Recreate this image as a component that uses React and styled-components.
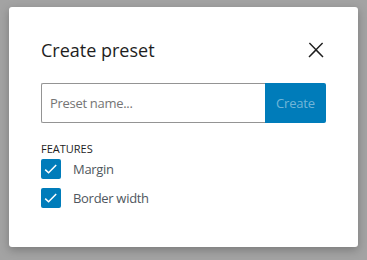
import React from "react";
import styled, {createGlobalStyle} from "styled-components";

const GlobalStyle = createGlobalStyle`
    html, body {
        margin: 0;
        padding: 0;
        height: 100%;
    }
    body {
        background: #a3a3a3;
        font-family: "Open Sans", "Noto Sans", sans-serif;
    }
    #root {
        height: 100%;
    }
`;

const Overlay = styled.div`
    height: 260px;
    display: flex;
    justify-content: center;
    align-items: flex-start;
    padding-top: 7px;
    box-sizing: border-box;
`;

const Dialog = styled.div`
    width: 349px;
    height: 240px;
    box-sizing: border-box;
    background: #fff;
    border-radius: 3px;
    box-shadow: 0 3px 10px rgba(0, 0, 0, 0.25);
    padding: 25px 32px 0 32px;
    display: flex;
    flex-direction: column;
`;

const Header = styled.div`
    height: 36px;
    display: flex;
    align-items: center;
    justify-content: space-between;
`;

const Title = styled.h1`
    margin: 0;
    font-size: 18px;
    line-height: 24px;
    font-weight: 400;
    color: #1e1e1e;
`;

const CloseButton = styled.button`
    width: 24px;
    height: 24px;
    padding: 0;
    margin-right: -2px;
    border: none;
    background: none;
    display: flex;
    align-items: center;
    justify-content: center;
    cursor: pointer;
    svg {
        fill: #1e1e1e;
    }
`;

const Form = styled.div`
    margin-top: 15px;
    display: flex;
    height: 40px;
`;

const NameInput = styled.input`
    flex: 1;
    min-width: 0;
    box-sizing: border-box;
    height: 40px;
    border: 1px solid #949494;
    border-right: none;
    border-radius: 2px 0 0 2px;
    padding: 0 8px;
    font-family: inherit;
    font-size: 13px;
    letter-spacing: -0.3px;
    color: #1e1e1e;
    outline: none;
    &::placeholder {
        color: #757575;
    }
`;

const CreateButton = styled.button`
    width: 61px;
    height: 40px;
    border: none;
    border-radius: 0 2px 2px 0;
    background: #007cba;
    color: rgba(255, 255, 255, 0.45);
    font-family: inherit;
    font-size: 13px;
    letter-spacing: -0.2px;
    padding: 0;
`;

const Features = styled.fieldset`
    border: none;
    margin: 18px 0 0 0;
    padding: 0;
    display: flex;
    flex-direction: column;
    gap: 9px;
`;

const Legend = styled.div`
    font-size: 11px;
    line-height: 16px;
    text-transform: uppercase;
    color: #1e1e1e;
    margin-bottom: -7px;
`;

const Option = styled.label`
    display: flex;
    align-items: center;
    gap: 12px;
    height: 20px;
    font-size: 13px;
    letter-spacing: -0.3px;
    color: #50575e;
`;

const Box = styled.span`
    width: 20px;
    height: 20px;
    border-radius: 2px;
    background: ${props => props.checked ? "#007cba" : "#fff"};
    border: ${props => props.checked ? "none" : "1px solid #1e1e1e"};
    display: flex;
    align-items: center;
    justify-content: center;
`;

const CheckMark = () => (
    <svg width="20" height="20" viewBox="0 0 20 20">
        <path d="M4.2 10.6 L7.6 13.8 L15.2 6" fill="none" stroke="#fff" strokeWidth="1.5" />
    </svg>
);

const features = [
    {label: "Margin", checked: true},
    {label: "Border width", checked: true}
];

const App = () => (
    <>
        <GlobalStyle />
        <Overlay>
            <Dialog>
                <Header>
                    <Title>Create preset</Title>
                    <CloseButton aria-label="Close">
                        <svg width="24" height="24" viewBox="0 0 24 24">
                            <path d="M13 11.8l6.1-6.3-1-1-6.1 6.2-6.1-6.2-1 1 6.1 6.3-6.5 6.7 1 1 6.5-6.6 6.5 6.6 1-1z" />
                        </svg>
                    </CloseButton>
                </Header>
                <Form>
                    <NameInput placeholder="Preset name..." />
                    <CreateButton disabled>Create</CreateButton>
                </Form>
                <Features>
                    <Legend>Features</Legend>
                    {features.map(f => (
                        <Option key={f.label}>
                            <Box checked={f.checked}>{f.checked && <CheckMark />}</Box>
                            {f.label}
                        </Option>
                    ))}
                </Features>
            </Dialog>
        </Overlay>
    </>
);

export default App;
